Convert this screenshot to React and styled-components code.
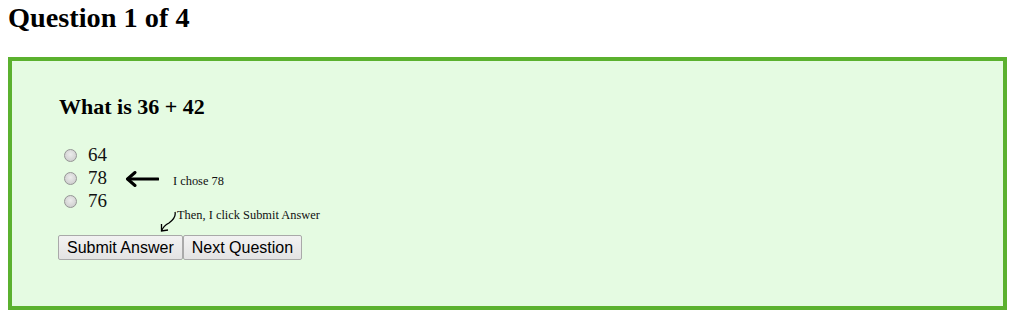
import React from "react";
import styled, { createGlobalStyle } from "styled-components";

const Global = createGlobalStyle`
  html, body { margin: 0; padding: 0; background: #ffffff; }
  body { font-family: "Liberation Serif", "Times New Roman", serif; color: #000; }
  * { box-sizing: border-box; }
`;

const Page = styled.div`
  padding: 2px 8px 0 8px;
`;

const Title = styled.h1`
  margin: 0 0 24px 0;
  font-size: 28.3px;
  line-height: 31px;
  font-weight: bold;
`;

const QuizBox = styled.section`
  width: 999px;
  height: 253px;
  border: 4px solid #5bb12f;
  background: #e5fbe2;
  padding: 34px 47px 0 47px;
`;

const Question = styled.h3`
  margin: 0 0 24px 0;
  font-size: 22px;
  line-height: 24px;
  font-weight: bold;
`;

const Options = styled.div`
  display: flex;
  flex-direction: column;
`;

const OptionRow = styled.label`
  display: flex;
  align-items: center;
  height: 23px;
  font-size: 19px;
  line-height: 23px;
  color: #111;
`;

const Radio = styled.input.attrs({ type: "radio" })`
  appearance: none;
  -webkit-appearance: none;
  width: 13px;
  height: 13px;
  margin: 1px 11px 0 5px;
  border-radius: 50%;
  border: 1px solid #959595;
  background: radial-gradient(circle at 50% 40%, #ececec 0%, #d6d6d6 60%, #c4c4c4 100%);
  flex: none;
`;

const PointArrow = styled.svg`
  margin-left: 18px;
  margin-top: 2px;
  flex: none;
`;

const Note = styled.span`
  font-size: 12.4px;
  line-height: 12px;
  color: #111;
  margin-left: ${(p) => p.$gap || 0}px;
  margin-top: ${(p) => p.$top || 0}px;
`;

const NoteRow = styled.div`
  display: flex;
  align-items: flex-start;
  margin-top: -3px;
  height: 26px;
`;

const CurlArrow = styled.svg`
  margin-left: 100px;
  margin-top: -1px;
  flex: none;
`;

const Buttons = styled.div`
  display: flex;
  margin-left: -1px;
`;

const Button = styled.button`
  height: 25px;
  padding: 0 8px;
  font-family: "Liberation Sans", Arial, sans-serif;
  font-size: 16px;
  color: #000;
  border: 1px solid #a9a9a9;
  border-radius: 2px;
  background: linear-gradient(#f2f2f2, #e3e3e3);
  margin: 0;
`;

export default function App() {
  return (
    <Page>
      <Global />
      <Title>Question 1 of 4</Title>
      <QuizBox>
        <Question>What is 36 + 42</Question>
        <Options>
          <OptionRow>
            <Radio name="q1" />
            64
          </OptionRow>
          <OptionRow>
            <Radio name="q1" />
            78
            <PointArrow width="34" height="16" viewBox="0 0 34 16">
              <path d="M3 8 L33 8" stroke="#000" strokeWidth="3" fill="none" strokeLinecap="round" />
              <path d="M10 1.5 L2.5 8 L10 14.5" stroke="#000" strokeWidth="3" fill="none" strokeLinecap="round" strokeLinejoin="round" />
            </PointArrow>
            <Note $gap={14} $top={7}>I chose 78</Note>
          </OptionRow>
          <OptionRow>
            <Radio name="q1" />
            76
          </OptionRow>
        </Options>
        <NoteRow>
          <CurlArrow width="18" height="25" viewBox="0 0 18 25">
            <path d="M16 4 C17 8 14 12 10 15 C6 17 4 19 2.5 23" stroke="#000" strokeWidth="1.3" fill="none" />
            <path d="M2.5 16 L2.5 23 L9 22" stroke="#000" strokeWidth="1.3" fill="none" />
          </CurlArrow>
          <Note>Then, I click Submit Answer</Note>
        </NoteRow>
        <Buttons>
          <Button>Submit Answer</Button>
          <Button>Next Question</Button>
        </Buttons>
      </QuizBox>
    </Page>
  );
}
